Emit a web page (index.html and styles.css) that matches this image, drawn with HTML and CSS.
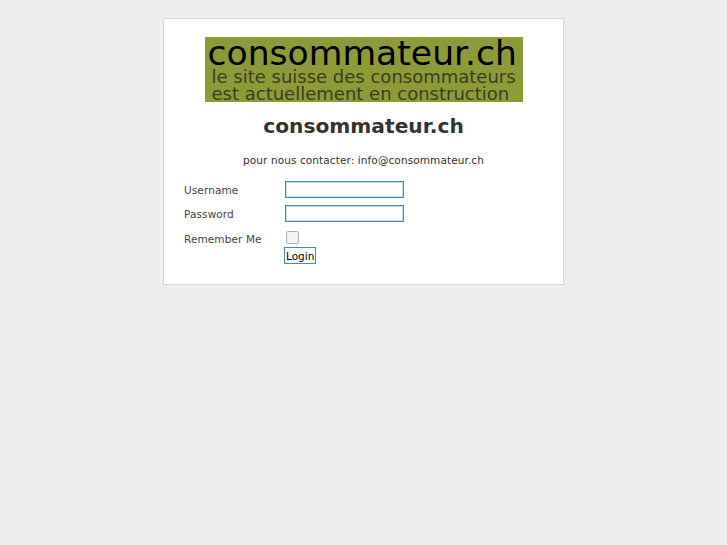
FILE: index.html
```html
<!DOCTYPE html>
<html>
<head>
<meta charset="utf-8">
<link rel="stylesheet" href="styles.css">
</head>
<body>
<div class="card">
  <div class="banner">
    <div class="banner-title">consommateur.ch</div>
    <div class="banner-sub">le site suisse des consommateurs<br>est actuellement en construction</div>
  </div>
  <h1 class="title">consommateur.ch</h1>
  <p class="contact">pour nous contacter: info@consommateur.ch</p>
  <form class="login">
    <div class="row"><label class="lbl">Username</label><input class="field" type="text"></div>
    <div class="row"><label class="lbl">Password</label><input class="field" type="password"></div>
    <div class="row row-check"><label class="lbl">Remember Me</label><div class="ctrl"><span class="check"></span><button class="btn" type="button">Login</button></div></div>
  </form>
</div>
</body>
</html>
```

FILE: styles.css
```css
html, body { margin: 0; padding: 0; }
body {
  background: #eeeeee;
  font-family: "DejaVu Sans", sans-serif;
  color: #333;
  padding-top: 18px;
}
.card {
  width: 399px;
  height: 265px;
  margin: 0 auto;
  background: #fff;
  border: 1px solid #d6d6d6;
  display: flex;
  flex-direction: column;
  align-items: center;
}
.banner {
  margin-top: 18px;
  width: 318px;
  height: 65px;
  background: #8c9a38;
  box-sizing: border-box;
  padding-left: 3px;
}
.banner-title {
  font-size: 34.6px;
  line-height: 33px;
  color: #000;
}
.banner-sub {
  font-size: 18px;
  line-height: 17px;
  color: #3b3f1d;
  padding-left: 4px;
  margin-top: -2px;
}
.title {
  margin: 12px 0 0;
  font-size: 20.2px;
  line-height: 24px;
  font-weight: bold;
  color: #333;
}
.contact {
  margin: 15px 0 0;
  font-size: 10.5px;
  line-height: 14px;
  color: #333;
  letter-spacing: 0.1px;
}
.login {
  align-self: flex-start;
  margin: 14px 0 0 20px;
  display: flex;
  flex-direction: column;
  gap: 7px;
}
.row { display: flex; align-items: center; }
.lbl {
  width: 101px;
  font-size: 10.5px;
  color: #444;
  letter-spacing: 0.1px;
}
.field {
  width: 119px;
  height: 17px;
  box-sizing: border-box;
  margin: 0;
  border: 1px solid #4a86b8;
  box-shadow: inset 0 0 0 1px #c7dcec;
  padding: 0;
}
.row-check { align-items: flex-start; margin-top: 1px; }
.row-check .lbl { margin-top: 3px; }
.ctrl { display: flex; flex-direction: column; align-items: flex-start; gap: 3px; }
.check {
  display: block;
  width: 11px;
  height: 11px;
  margin: 1px 0 0 1px;
  border: 1px solid #b0b0b0;
  border-radius: 2px;
  background: #f4f4f4;
}
.btn {
  margin: 0 0 0 -1px;
  height: 17px;
  padding: 0 1px;
  background: #fff;
  border: 1px solid #4a86b8;
  font-family: "DejaVu Sans", sans-serif;
  font-size: 10.5px;
  color: #000;
  line-height: 14px;
}
```
